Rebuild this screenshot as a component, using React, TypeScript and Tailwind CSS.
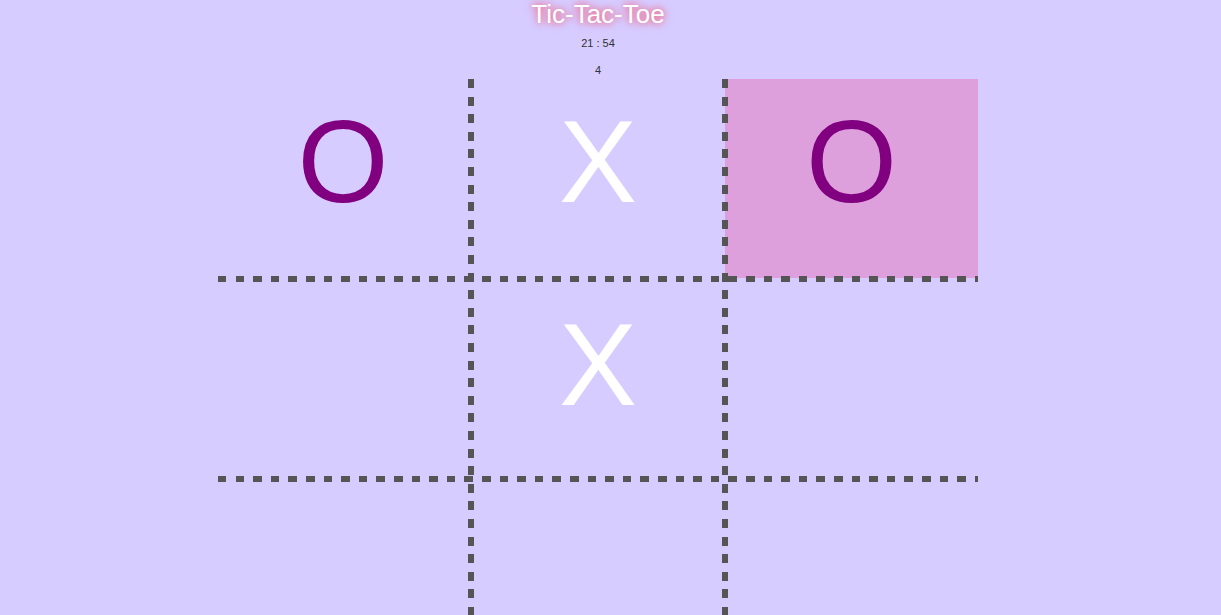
import React from "react";

type Cell = { value: string; place: string; win?: boolean };

const cells: Cell[] = [
  { value: "O", place: "col-start-1 row-start-1" },
  { value: "X", place: "col-start-3 row-start-1" },
  { value: "O", place: "col-start-5 row-start-1 -ml-[3px] -mb-[2px]", win: true },
  { value: "", place: "col-start-1 row-start-3" },
  { value: "X", place: "col-start-3 row-start-3" },
  { value: "", place: "col-start-5 row-start-3" },
  { value: "", place: "col-start-1 row-start-5" },
  { value: "", place: "col-start-3 row-start-5" },
  { value: "", place: "col-start-5 row-start-5" },
];

const vLine = "row-start-1 row-span-5 bg-[image:repeating-linear-gradient(to_bottom,#555_0_9px,transparent_9px_17.6px)]";
const hLine = "col-start-1 col-span-5 bg-[image:repeating-linear-gradient(to_right,#555_0_8.5px,transparent_8.5px_17.6px)]";

const App = () => {
  return (
    <div className="min-h-screen bg-[#d6ccff] pr-[25px] font-['Liberation_Sans',Arial,sans-serif]">
      <h1 className="text-center text-[26px] leading-[29px] text-white [text-shadow:0_0_6px_#ee6f8f,0_0_10px_#ee6f8f]">
        Tic-Tac-Toe
      </h1>
      <p className="mt-[8px] text-center text-[11px] leading-[13px] text-[#333]">21 : 54</p>
      <p className="mt-[14px] text-center text-[11px] leading-[13px] text-[#333]">4</p>

      <div className="mx-auto mt-[2px] grid w-[760px] grid-cols-[250px_6px_248px_6px_250px] grid-rows-[197px_6px_194px_6px_197px]">
        {cells.map((cell, i) => (
          <div
            key={i}
            className={`${cell.place} pt-[16px] text-center text-[117px] leading-[134px] ${
              cell.win ? "bg-[#dda0dd]" : ""
            } ${cell.value === "X" ? "text-white" : "text-[#800080]"}`}
          >
            {cell.value}
          </div>
        ))}
        {/* dashed grid lines, painted after the cells */}
        <div className={`col-start-2 ${vLine}`} />
        <div className={`col-start-4 ${vLine}`} />
        <div className={`row-start-2 ${hLine}`} />
        <div className={`row-start-4 ${hLine}`} />
      </div>
    </div>
  );
};

export default App;
